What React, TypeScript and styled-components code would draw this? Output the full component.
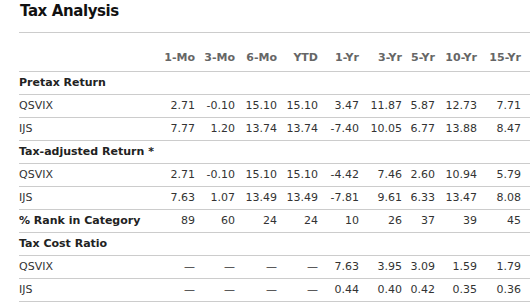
import React from 'react';
import styled, { createGlobalStyle } from 'styled-components';

const GlobalStyle = createGlobalStyle`
  body {
    margin: 0;
    background: #fff;
    font-family: Verdana, 'DejaVu Sans', sans-serif;
    color: #333;
  }
`;

const COLUMNS = '136px 40px 40px 42px 41px 41px 43px 33px 42px 44px 1fr';

const Panel = styled.section`
  width: 530px;
  height: 305px;
  padding-left: 19px;
  box-sizing: border-box;
  overflow: hidden;
`;

const Title = styled.h2`
  margin: 0;
  height: 33px;
  padding: 2px 0 0 1px;
  box-sizing: border-box;
  font-size: 15px;
  font-weight: bold;
  letter-spacing: -0.4px;
  line-height: 18px;
  color: #111;
  border-bottom: 1px solid #ccc;
`;

const Row = styled.div<{ $head?: boolean }>`
  display: grid;
  grid-template-columns: ${COLUMNS};
  align-items: ${({ $head }) => ($head ? 'end' : 'center')};
  height: ${({ $head }) => ($head ? '32px' : '22px')};
  padding-bottom: ${({ $head }) => ($head ? '6px' : '0')};
  border-bottom: 1px solid #ccc;
  font-size: 11px;
  line-height: 14px;
`;

const HeadCell = styled.div`
  text-align: right;
  font-weight: bold;
  color: #666;
  white-space: nowrap;
`;

const Label = styled.div<{ $bold?: boolean }>`
  font-weight: ${({ $bold }) => ($bold ? 'bold' : 'normal')};
  color: ${({ $bold }) => ($bold ? '#222' : '#333')};
  white-space: nowrap;
`;

const Value = styled.div`
  text-align: right;
  white-space: nowrap;
`;

const headers = ['1-Mo', '3-Mo', '6-Mo', 'YTD', '1-Yr', '3-Yr', '5-Yr', '10-Yr', '15-Yr'];

type Line = { label: string; bold?: boolean; values?: string[] };

const D = '—';

const lines: Line[] = [
  { label: 'Pretax Return', bold: true },
  { label: 'QSVIX', values: ['2.71', '-0.10', '15.10', '15.10', '3.47', '11.87', '5.87', '12.73', '7.71'] },
  { label: 'IJS', values: ['7.77', '1.20', '13.74', '13.74', '-7.40', '10.05', '6.77', '13.88', '8.47'] },
  { label: 'Tax-adjusted Return *', bold: true },
  { label: 'QSVIX', values: ['2.71', '-0.10', '15.10', '15.10', '-4.42', '7.46', '2.60', '10.94', '5.79'] },
  { label: 'IJS', values: ['7.63', '1.07', '13.49', '13.49', '-7.81', '9.61', '6.33', '13.47', '8.08'] },
  { label: '% Rank in Category', bold: true, values: ['89', '60', '24', '24', '10', '26', '37', '39', '45'] },
  { label: 'Tax Cost Ratio', bold: true },
  { label: 'QSVIX', values: [D, D, D, D, '7.63', '3.95', '3.09', '1.59', '1.79'] },
  { label: 'IJS', values: [D, D, D, D, '0.44', '0.40', '0.42', '0.35', '0.36'] },
];

const App: React.FC = () => (
  <>
    <GlobalStyle />
    <Panel>
      <Title>Tax Analysis</Title>
      <Row $head>
        <div />
        {headers.map((h) => (
          <HeadCell key={h}>{h}</HeadCell>
        ))}
      </Row>
      {lines.map((line, i) => (
        <Row key={i}>
          <Label $bold={line.bold}>{line.label}</Label>
          {(line.values || []).map((v, j) => (
            <Value key={j}>{v}</Value>
          ))}
        </Row>
      ))}
    </Panel>
  </>
);

export default App;
